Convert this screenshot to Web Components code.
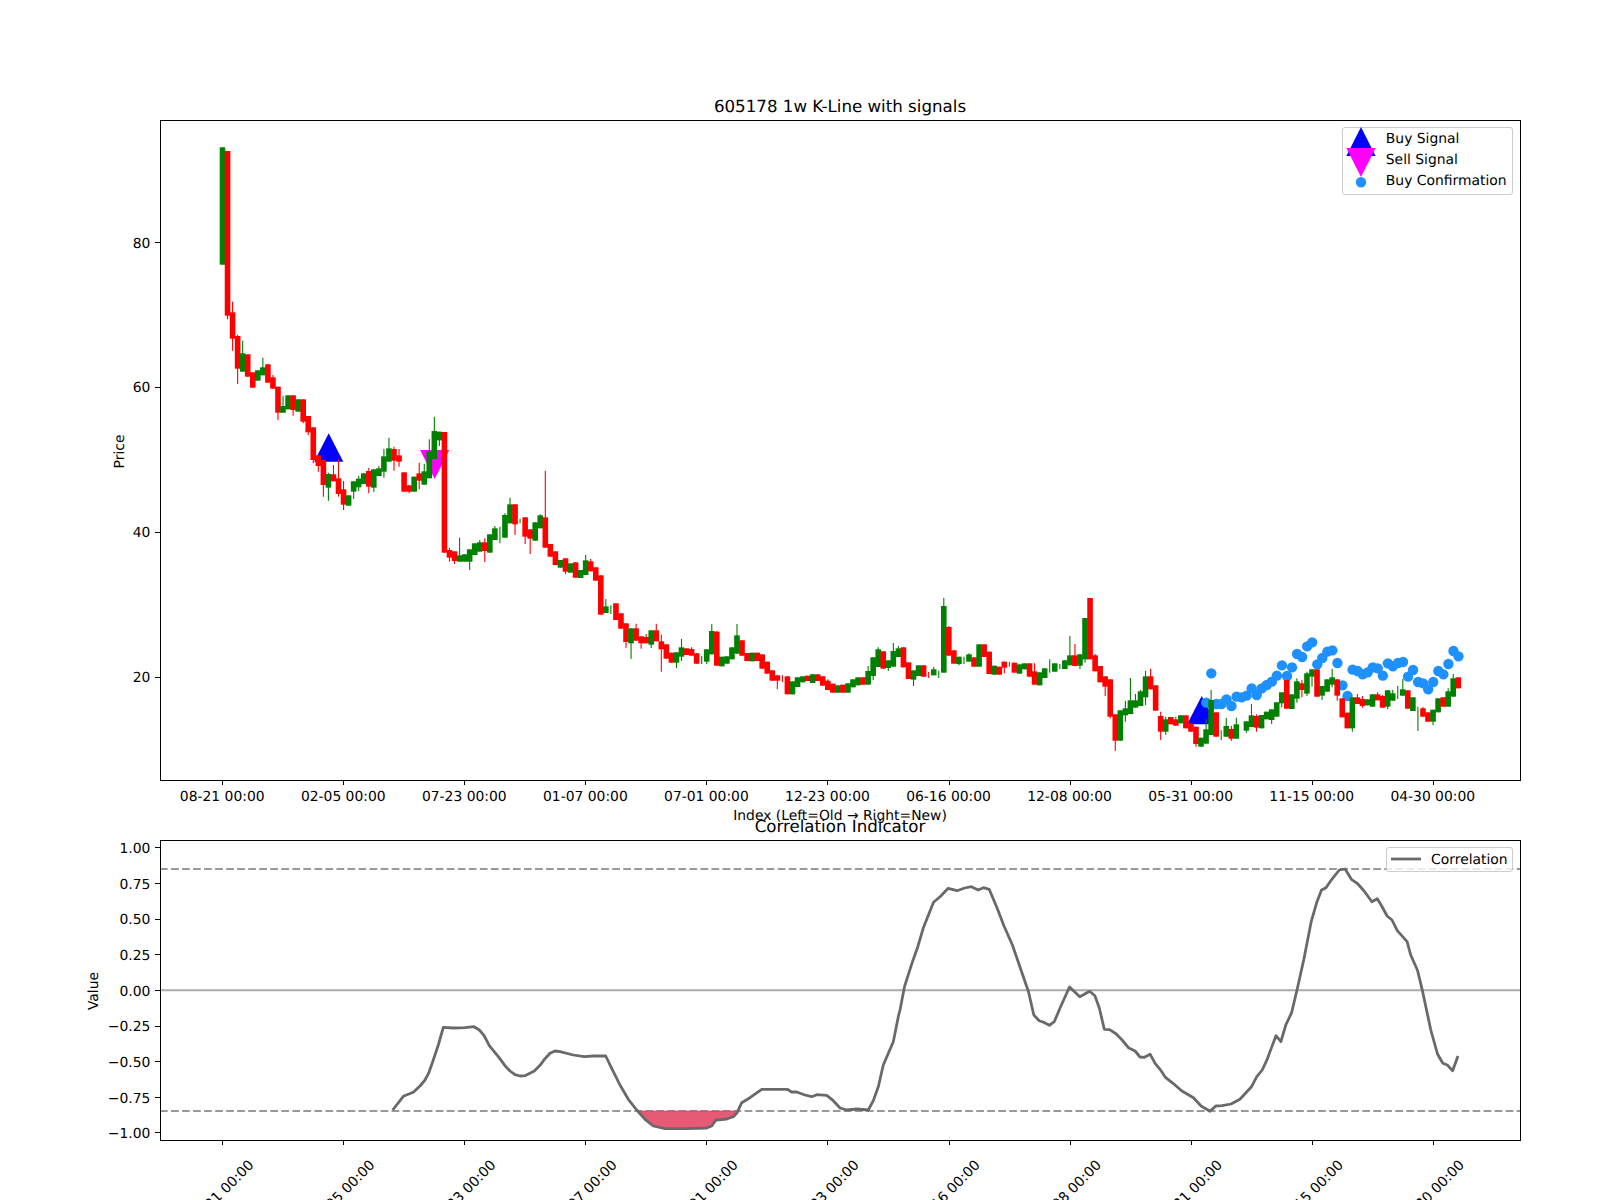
<!DOCTYPE html>
<html>
<head>
<meta charset="utf-8">
<title>605178 1w K-Line with signals</title>
<style>
  html, body { margin: 0; padding: 0; background: #fff; overflow: hidden; }
</style>
</head>
<body>
<mpl-figure>
  <candle-axes>
    <mpl-legend style="--w: 171px; --pad: 3px; --gap: 9.5px; --pad-top: 0px; --pad-bottom: 3px">
      <legend-item kind="up">Buy Signal</legend-item>
      <legend-item kind="down">Sell Signal</legend-item>
      <legend-item kind="dot">Buy Confirmation</legend-item>
    </mpl-legend>
  </candle-axes>
  <corr-axes>
    <mpl-legend style="--w: 127.3px; --pad: 4.4px; --gap: 9.7px; --pad-top: .7px; --pad-bottom: 1.3px">
      <legend-item kind="line">Correlation</legend-item>
    </mpl-legend>
  </corr-axes>
</mpl-figure>

<script>
const TICK_LABELS = ['08-21', '02-05', '07-23', '01-07', '07-01', '12-23', '06-16', '12-08', '05-31', '11-15', '04-30']
const barX = i => 222.7 + 5.044 * i
const snap = v => Math.floor(v) + 0.5

// each block: first bar index, zoom y origin, then "colour top bottom wickTop wickBottom" in 3x px
const BARS = [
  [0, 100, `g 142 494,r 153 647 0 658,r 637 716 605 752,r 708 806 704 852,g 760 815 722 0,r 763 830,r 817 863,g 811 842,g 802 826 773 0,r 793 848,r 832 866 825 0`],
  [11, 375, `r 35 113 0 135`],
  [12, 380, `g 78 98 47 0,g 46 88,r 46 90 0 107,g 58 95,r 58 125 0 130,r 108 157 0 165,r 142 240 0 250,r 226 258 0 275,r 240 315 0 350,g 282 323 278 362,r 283 304 255 0,r 295 342 238 350,r 328 374 303 390,g 346 377,g 304 335 0 357,g 296 322 288 333,g 280 312,r 273 320 264 340,g 268 323 0 336,g 265 288 258 0,g 229 275 207 293,g 205 245 173 0,r 207 242 200 272,r 226 245 207 260,r 277 335,r 316 335 0 340,g 290 335,r 280 302 248 328,g 274 314 252 0,g 214 295 178 0,g 153 237 110 0,g 155 181 0 198,r 156 518,r 510 533 503 545,r 514 543 0 552,g 526 545 473 0,g 523 545,g 508 545 0 570,g 490 525,g 487 515 480 0,r 487 513 475 546,g 463 518,g 445 480 438 0,g 0 0 440 490,g 405 473 400 0,g 373 430 353 0,r 373 433 0 465,g 0 0 416 430,r 412 470 0 492,r 448 476 0 522,g 427 482,g 406 445 403 0,r 412 503 272 0,r 492 530,r 514 555,g 540 563,r 535 575 0 582,g 550 578,r 547 593,g 570 594,g 541 585 524 0,r 544 574 537 0,r 562 602,r 586 704,g 679 699 657 0,g 0 0 676 702,r 670 720,r 700 746,r 730 786 0 803,g 745 790 0 837,r 745 782 731 0,r 769 790 0 806,r 771 790 762 0,g 751 794 0 804,r 751 784 731 0,r 784 808 765 875,r 793 836,r 818 848,g 817 848 0 864`],
  [91, 560, `g 262 290 237 303,r 265 285,r 267 287 262 0,r 280 311,g 0 0 288 312,g 268 305 0 312,g 213 283 192 0,r 215 317 213 0,g 290 319,g 289 311,g 262 298,g 226 281 192 0,r 241 287,r 279 303,g 278 304,r 278 303,r 283 326,r 305 341,r 331 362,r 346 362 0 388,r 0 0 346 366,r 349 403,g 364 403,g 352 381,g 349 367,r 347 363,g 343 369,r 343 363,r 349 377,r 362 390 358 0,r 371 398,g 376 398,r 374 398,g 370 398,g 358 382,g 352 376,r 352 374,g 333 374 318 0,g 292 348 0 360,g 268 321 262 0,r 274 326,g 301 324 0 333,g 273 320 249 0,g 265 291 258 0,r 262 322,r 307 357,g 331 359 0 378,g 316 348,r 316 350,r 0 0 336 354,g 328 346 321 0,g 0 0 332 354,g 138 338 114 0,r 201 287 198 0,r 271 311,g 290 312 0 316,g 0 0 290 312,g 283 305 280 0,r 292 320,g 253 320,r 253 291,r 275 342,g 317 344,r 320 344,r 305 323 0 340,g 0 0 306 320,r 308 338,g 313 341`],
  [159, 580, `g 250 268,r 250 290,r 274 314 250 0,g 277 316,g 265 294,g 0 0 238 278,g 250 275,g 0 0 252 267,g 241 267,g 226 256 168 0,r 226 258 192 0,g 223 257 0 267,g 114 238 0 248,r 54 238,r 226 274 222 0,r 258 307,r 289 320 0 348,r 298 410 0 415,r 403 482 0 513,g 391 482,g 385 406 362 425,g 361 402 294 0,g 361 383 342 0,g 334 378 330 0,g 289 352 272 375,r 289 328 266 0,r 316 392,r 408 455 395 480,g 418 455 410 465,r 411 433,r 418 437 410 0,g 406 430,r 406 445,r 430 455,r 440 492 0 500,g 473 500,g 448 491 418 0,g 360 465 330 0,r 397 470,g 0 0 450 480,g 438 470 414 0,r 447 476 437 483,g 433 476 413 0,g 0 0 0 0,g 424 452 0 458,g 406 441 372 0,r 408 443 403 455`],
  [206, 600, `g 345 385,g 335 358,g 328 360 0 372,g 307 350,g 277 310 0 322,r 240 326,g 283 327,g 244 296 235 308,r 250 270 240 292,g 220 281 215 288,g 208 230 0 260,r 208 290,g 258 287 0 300,g 238 275,g 232 254 206 262,r 238 287 0 302,r 295 352,r 338 385,g 292 385 0 395,r 292 312 282 0,r 297 318 288 323,g 298 316,g 283 320,r 283 301 277 0,r 288 323 285 0,g 271 320 0 327,g 280 302 270 0,g 0 0 258 297,g 268 287 237 0,r 271 326,g 292 333,g 0 0 321 393,r 325 350 321 0,r 337 365,g 329 365 0 376,g 295 337,r 292 320,g 274 320 265 0,g 235 290 222 0,r 232 265`]
]

// buy confirmation dots: first index, zoom y origin, y values in 3x px
const DOTS = [
  [195, 580, [368, 280, 372, 372, 358, 378, 350, 352, 347, 325, 345]],
  [206, 600, [265, 255, 245, 227, 196, 228, 202, 162, 171, 139, 127, 193, 174, 155, 151, 189, 256, 288, 209, 213, 223, 217, 202, 205, 227, 190, 199, 189, 186, 230, 210, 246, 250, 268, 246, 213, 223, 192, 153, 169]]
]

// correlation polyline, read off in three crops
const CORR = [
  [60, 780, 3, `998,990 1030,949 1060,937 1080,918 1095,900 1107,877 1120,840 1135,795 1150,742 1182,744 1215,743 1242,740 1258,750 1272,766 1288,797 1315,830 1335,857 1350,873 1365,884 1380,888 1395,887 1423,873 1440,856 1455,836 1470,820 1485,813`],
  [540, 1000, 3, `60,155 100,165 133,170 160,168 197,168 215,205 240,255 265,298 290,330 315,358 340,378 375,386 440,386 500,384 515,378 528,360 560,357 580,350 590,340 605,308 630,293 665,268 742,268 755,276 770,276 795,285 815,290 830,284 860,286 880,302 900,324 920,330 950,327 985,330 1000,302 1015,260 1030,195 1060,125 1075,50`],
  [900, 820, 2.242, `0,570 10,500 28,425 40,380 52,325 75,247 90,230 108,205 128,212 145,204 160,200 175,210 187,203 200,208 218,265 233,317 252,375 270,445 288,515 300,585 312,602 322,607 335,616 346,605 360,560 380,501 403,530 425,514 437,527 447,565 458,628 470,629 485,642 498,660 512,683 527,693 538,711 548,712 561,703 572,730 583,748 595,772 612,790 632,813 658,833 675,858 695,874 708,858 722,857 742,852 762,838 788,800 800,770 812,750 822,722 843,647 854,665 865,615 878,578 890,510 905,420 922,305 935,245 945,210 955,203 968,178 985,150 998,147 1012,178 1025,190 1040,212 1058,245 1070,236 1080,258 1092,288 1103,300 1115,332 1137,365 1145,405 1160,450 1170,505 1190,630 1205,702 1217,730 1227,735 1239,752 1251,708`]
]

class MplFigure extends HTMLElement {
  constructor() {
    super()
    this.attachShadow({mode: 'open'}).innerHTML = `
    <style>
      :host {
        display: flex;
        flex-direction: column;
        gap: 60px;
        box-sizing: border-box;
        width: 1600px;
        height: 1200px;
        padding: 120px 80px 0 160px;
        overflow: hidden;
        background: #fff;
        font-family: "DejaVu Sans", sans-serif;
        color: #000;
        text-rendering: geometricPrecision;
      }
    </style>
    <slot></slot>`
  }
}

// shared frame: spines, ticks and labels, with svg coordinates equal to page pixels
class MplAxes extends HTMLElement {
  static top = 0
  static height = 0

  connectedCallback() {
    const {top, height} = this.constructor
    const bottom = top + height
    const ticks = TICK_LABELS.map((label, n) => {
      const x = barX(24 * n)
      return `<line x1="${snap(x)}" x2="${snap(x)}" y1="${bottom}" y2="${bottom + 5}" class="tick"/>` + this.xTick(x, `${label} 00:00`)
    }).join('')
    const yTicks = this.yTicks().map(([y, label]) =>
      `<line x1="155" x2="160" y1="${snap(y)}" y2="${snap(y)}" class="tick"/>
       <text x="150.3" y="${y + 1.2}" text-anchor="end" class="mid">${label}</text>`).join('')

    this.attachShadow({mode: 'open'}).innerHTML = `
    <style>
      :host { display: block; position: relative; width: 1360px; height: ${height}px; }
      svg { position: absolute; left: 0; top: 0; overflow: visible; }
      text { font-size: 13.89px; fill: #000; }
      .mid { dominant-baseline: central; }
      .title { font-size: 16.67px; }
      .tick { stroke: #000; stroke-width: 1; }
      .spine { fill: none; stroke: #000; stroke-width: 1; }
    </style>
    <svg width="1360" height="${height}" viewBox="160 ${top} 1360 ${height}">
      ${this.plot()}
      <rect x="160.5" y="${top + 0.5}" width="1360" height="${height}" class="spine"/>
      ${ticks}${yTicks}
      ${this.labels()}
    </svg>
    <slot></slot>`
  }
}

class CandleAxes extends MplAxes {
  static top = 120
  static height = 660

  yTicks() {
    return [[242.3, '80'], [387.2, '60'], [532.2, '40'], [677.2, '20']]
  }

  xTick(x, label) {
    return `<text x="${x - 0.5}" y="797" text-anchor="middle" class="mid">${label}</text>`
  }

  labels() {
    return `
      <text x="840" y="816" text-anchor="middle" class="mid">Index (Left=Old → Right=New)</text>
      <text x="840" y="106.5" text-anchor="middle" class="mid title">605178 1w K-Line with signals</text>
      <text transform="translate(120 451.5) rotate(-90)" text-anchor="middle" class="mid">Price</text>`
  }

  plot() {
    const tri = (x, base, apex, fill) =>
      `<polygon points="${x - 14.6},${base} ${x + 14.6},${base} ${x},${apex}" fill="${fill}"/>`
    let out = tri(328.7, 461.7, 433.3, '#0000ff') + tri(434.7, 450, 479, '#ff00ff') + tri(1201.7, 724.3, 696, '#0000ff')

    for (const [start, oy, ys] of DOTS) {
      ys.forEach((v, n) => {
        out += `<circle cx="${barX(start + n)}" cy="${oy + v / 3}" r="5.2" fill="#1e90ff"/>`
      })
    }

    for (const [start, oy, rows] of BARS) {
      rows.split(',').forEach((row, n) => {
        const [c, ...nums] = row.split(' ')
        const [top, bot, wickTop = 0, wickBot = 0] = nums.map(Number)
        const x = barX(start + n) - 0.2
        const fill = c === 'r' ? '#ff0000' : '#008000'
        const y = v => oy + v / 3
        const yTop = wickTop ? y(wickTop) : y(top)
        const yBot = wickBot ? y(wickBot) : y(bot)
        if (yBot > yTop) {
          out += `<line x1="${x}" x2="${x}" y1="${yTop}" y2="${yBot}" stroke="${fill}" stroke-width="1.1"/>`
        }
        if (bot > top) {
          out += `<rect x="${x - 2.8}" y="${y(top)}" width="5.6" height="${(bot - top) / 3}" fill="${fill}"/>`
        }
      })
    }
    return out
  }
}

class CorrAxes extends MplAxes {
  static top = 840
  static height = 300

  yTicks() {
    return ['1.00', '0.75', '0.50', '0.25', '0.00', '−0.25', '−0.50', '−0.75', '−1.00']
      .map((label, n) => [847.7 + n * 35.66, label])
  }

  xTick(x, label) {
    return `<text transform="translate(${x - 1} 1193) rotate(-45)" text-anchor="middle" class="mid">${label}</text>`
  }

  labels() {
    return `
      <text x="840" y="826.7" text-anchor="middle" class="mid title">Correlation Indicator</text>
      <text transform="translate(94 991) rotate(-90)" text-anchor="middle" class="mid">Value</text>`
  }

  plot() {
    const points = CORR.flatMap(([ox, oy, sx, text]) => text.split(' ').map(pair => {
      const [x, y] = pair.split(',').map(Number)
      return `${(ox + x / sx).toFixed(1)},${(oy + y / 3).toFixed(1)}`
    })).join(' ')

    const hit = `640,1111 645,1119.3 653.3,1126 665,1128.7 686.7,1128.7 706.7,1128 711.7,1126 716,1120 726.7,1119 733.3,1116.7 736.7,1111`
    const hLine = (y, color, dash) =>
      `<line x1="160" x2="1520" y1="${y}" y2="${y}" stroke="${color}" stroke-width="2.08" ${dash ? 'stroke-dasharray="7.7 3.33"' : ''}/>`

    return `
      ${hLine(869, '#999999', true)}
      ${hLine(1111, '#999999', true)}
      ${hLine(990.3, '#aaaaaa', false)}
      <polygon points="${hit}" fill="#e65a76" stroke="#e0305c" stroke-opacity=".6" stroke-width="1.2"/>
      <polyline points="${points}" fill="none" stroke="#696969" stroke-width="2.78" stroke-linejoin="round"/>`
  }
}

class MplLegend extends HTMLElement {
  constructor() {
    super()
    this.attachShadow({mode: 'open'}).innerHTML = `
    <style>
      :host {
        position: absolute;
        top: 7.3px;
        right: 6.7px;
        box-sizing: border-box;
        width: var(--w);
        padding: var(--pad-top) 0 var(--pad-bottom) var(--pad);
        border: 1.1px solid #cccccc;
        border-radius: 3px;
        background: rgba(255, 255, 255, .8);
        font-size: 13.89px;
      }
    </style>
    <slot></slot>`
  }
}

class LegendItem extends HTMLElement {
  connectedCallback() {
    const shapes = {
      up: `<polygon points="0.4,32 29.6,32 15,3" fill="#0000ff"/>`,
      down: `<polygon points="0.4,3 29.6,3 15,32" fill="#ff00ff"/>`,
      dot: `<circle cx="15" cy="17.3" r="5.2" fill="#1e90ff"/>`,
      line: `<line x1="0" x2="30" y1="15" y2="15" stroke="#696969" stroke-width="2.78"/>`
    }
    this.attachShadow({mode: 'open'}).innerHTML = `
    <style>
      :host { display: flex; align-items: center; gap: var(--gap); height: 20.8px; line-height: 20.8px; white-space: nowrap; }
      svg { flex: none; overflow: visible; }
      .label { margin-top: 2px; }
    </style>
    <svg width="30" height="30" viewBox="0 0 30 30">${shapes[this.getAttribute('kind')]}</svg>
    <span class="label"><slot></slot></span>`
  }
}

customElements.define('mpl-figure', MplFigure)
customElements.define('candle-axes', CandleAxes)
customElements.define('corr-axes', CorrAxes)
customElements.define('mpl-legend', MplLegend)
customElements.define('legend-item', LegendItem)
</script>
</body>
</html>
